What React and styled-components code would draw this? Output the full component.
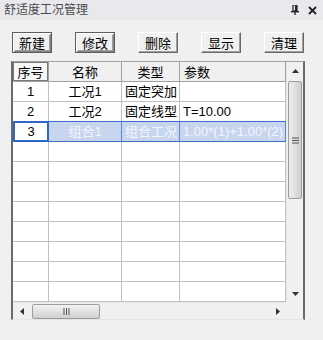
import React from "react";
import styled, { createGlobalStyle, css } from "styled-components";

const Global = createGlobalStyle`
  html, body { margin: 0; padding: 0; background: #f0f0f0; }
  body { font-family: "Liberation Sans", "Noto Sans CJK SC", sans-serif; }
  #root { width: 323px; height: 340px; overflow: hidden; }
`;

const Panel = styled.div`
  width: 323px;
  height: 340px;
  background: #f0f0f0;
  display: flex;
  flex-direction: column;
`;

const TitleBar = styled.div`
  height: 20px;
  background: #e8e9ed;
  display: flex;
  align-items: center;
  padding: 0 6px 0 4px;
  color: #4a4a4a;
  font-size: 12px;
  font-family: "Noto Sans CJK SC", sans-serif;
`;

const TitleText = styled.span`
  flex: 1;
  line-height: 20px;
  position: relative;
  top: -1px;
`;

const TitleIcons = styled.div`
  display: flex;
  align-items: center;
  gap: 9px;
`;

const Toolbar = styled.div`
  display: flex;
  justify-content: space-between;
  padding: 12px 19px 0 12px;
  height: 21px;
`;

const Button = styled.button`
  width: 40px;
  height: 21px;
  padding: 0;
  margin: 0;
  background: #f0f0f0;
  font-family: "Noto Sans CJK SC", sans-serif;
  font-size: 13px;
  color: #000;
  line-height: 17px;
  box-sizing: border-box;
  ${(p) =>
    p.$def
      ? css`
          border: 1px solid #5e5e5e;
          box-shadow: inset 1px 1px #fff, inset -1px -1px #808080,
            inset 2px 2px #f0f0f0, inset -2px -2px #a0a0a0;
        `
      : css`
          border: 1px solid;
          border-color: #fff #696969 #696969 #fff;
          box-shadow: inset -1px -1px #a0a0a0;
        `}
`;

const Frame = styled.div`
  margin: 8px 0 0 11px;
  width: 294px;
  box-sizing: border-box;
  border-top: 1px solid #a0a0a0;
  border-left: 2px solid #6a6a6a;
  border-right: 2px solid #6a6a6a;
  border-bottom: 1px solid #e4e4e4;
  display: grid;
  grid-template-columns: 273px 17px;
  grid-template-rows: 240px 17px;
  background: #f0f0f0;
`;

const Table = styled.div`
  background: #fff;
  overflow: hidden;
  display: grid;
  grid-template-columns: 36px 73px 58px 106px;
  grid-auto-rows: 20px;
  grid-template-rows: 20px;
`;

const HeadCell = styled.div`
  box-sizing: border-box;
  background: ${(p) => (p.$active ? "#f7f7f7" : "#f0f0f0")};
  border-right: 1px solid #a0a0a0;
  border-bottom: 1px solid #a0a0a0;
  ${(p) =>
    p.$active &&
    css`
      box-shadow: inset 1px 1px #7a7a7a, inset -1px -1px #7a7a7a;
    `}
  font-family: "Noto Sans CJK SC", sans-serif;
  font-size: 13px;
  color: #000;
  line-height: 19px;
  text-align: ${(p) => p.$align || "center"};
  padding-left: ${(p) => (p.$align === "left" ? "4px" : "0")};
  white-space: nowrap;
  overflow: hidden;
`;

const Cell = styled.div`
  box-sizing: border-box;
  border-right: 1px solid #c0c0c0;
  border-bottom: 1px solid #c0c0c0;
  font-size: 13px;
  line-height: 19px;
  color: #000;
  white-space: nowrap;
  overflow: hidden;
  text-align: ${(p) => p.$align || "center"};
  padding-left: ${(p) => (p.$align === "left" ? "3px" : "0")};
  ${(p) =>
    p.$sel &&
    css`
      background: #c7d5ef;
      color: #f2f5fc;
      border-right: 1px solid #5a88d8;
      border-top: 1px solid #3b6fc9;
      border-bottom: 1px solid #3b6fc9;
      margin-top: -1px;
      height: 21px;
      line-height: 19px;
    `}
  ${(p) =>
    p.$focus &&
    css`
      background: #fff;
      color: #000;
      border: 2px solid #3066c6;
      margin-top: -1px;
      height: 21px;
      line-height: 17px;
    `}
`;

const VScroll = styled.div`
  background: #f0f0f0;
  border-left: 1px solid #e8e8e8;
  display: flex;
  flex-direction: column;
  align-items: center;
`;

const ArrowBtn = styled.div`
  width: 16px;
  height: 17px;
  display: flex;
  align-items: center;
  justify-content: center;
  flex: none;
`;

const VThumb = styled.div`
  margin-top: 2px;
  width: 14px;
  height: 118px;
  box-sizing: border-box;
  border: 1px solid #9c9c9c;
  border-radius: 2px;
  background: linear-gradient(to right, #ececec, #e0e0e0 45%, #cfcfcf);
  display: flex;
  align-items: center;
  justify-content: center;
`;

const VTrack = styled.div`
  flex: 1;
  width: 100%;
`;

const HScroll = styled.div`
  background: #f0f0f0;
  border-top: 1px solid #e8e8e8;
  display: flex;
  align-items: center;
`;

const HArrow = styled.div`
  width: 17px;
  height: 16px;
  display: flex;
  align-items: center;
  justify-content: center;
  flex: none;
`;

const HThumb = styled.div`
  margin-left: 2px;
  width: 68px;
  height: 15px;
  box-sizing: border-box;
  border: 1px solid #9c9c9c;
  border-radius: 2px;
  background: linear-gradient(to bottom, #f2f2f2, #e2e2e2 50%, #d0d0d0);
  display: flex;
  align-items: center;
  justify-content: center;
`;

const HTrack = styled.div`
  flex: 1;
`;

const Corner = styled.div`
  background: #f0f0f0;
`;

const rows = [
  ["1", "工况1", "固定突加", ""],
  ["2", "工况2", "固定线型", "T=10.00"],
  ["3", "组合1", "组合工况", "1.00*(1)+1.00*(2)"],
];

export default function App() {
  const empty = Array.from({ length: 9 });
  return (
    <Panel>
      <Global />
      <TitleBar>
        <TitleText>舒适度工况管理</TitleText>
        <TitleIcons>
          <svg width="8" height="10" viewBox="0 0 8 10">
            <rect x="2" y="0" width="4" height="6" fill="none" stroke="#222" strokeWidth="1.2" />
            <rect x="4" y="0.5" width="2" height="5.5" fill="#222" />
            <rect x="0" y="6" width="8" height="1.4" fill="#222" />
            <rect x="3.4" y="7" width="1.3" height="3" fill="#222" />
          </svg>
          <svg width="9" height="9" viewBox="0 0 9 9">
            <path d="M1 1 L8 8 M8 1 L1 8" stroke="#222" strokeWidth="1.8" />
          </svg>
        </TitleIcons>
      </TitleBar>
      <Toolbar>
        <Button $def>新建</Button>
        <Button $def>修改</Button>
        <Button>删除</Button>
        <Button>显示</Button>
        <Button>清理</Button>
      </Toolbar>
      <Frame>
        <Table>
          <HeadCell $active>序号</HeadCell>
          <HeadCell>名称</HeadCell>
          <HeadCell>类型</HeadCell>
          <HeadCell $align="left">参数</HeadCell>
          {rows.map((r, i) => {
            const sel = i === 2;
            return (
              <React.Fragment key={i}>
                <Cell $focus={sel}>{r[0]}</Cell>
                <Cell $sel={sel}>{r[1]}</Cell>
                <Cell $sel={sel} $align="left">{r[2]}</Cell>
                <Cell $sel={sel} $align="left">{r[3]}</Cell>
              </React.Fragment>
            );
          })}
          {empty.map((_, i) => (
            <React.Fragment key={"e" + i}>
              <Cell />
              <Cell />
              <Cell />
              <Cell />
            </React.Fragment>
          ))}
        </Table>
        <VScroll>
          <ArrowBtn>
            <svg width="7" height="4" viewBox="0 0 7 4">
              <path d="M0 4 L3.5 0 L7 4 Z" fill="#333" />
            </svg>
          </ArrowBtn>
          <VThumb>
            <svg width="7" height="7" viewBox="0 0 7 7">
              <path d="M0 1 H7 M0 3.5 H7 M0 6 H7" stroke="#555" strokeWidth="1" />
            </svg>
          </VThumb>
          <VTrack />
          <ArrowBtn>
            <svg width="7" height="4" viewBox="0 0 7 4">
              <path d="M0 0 L7 0 L3.5 4 Z" fill="#333" />
            </svg>
          </ArrowBtn>
        </VScroll>
        <HScroll>
          <HArrow>
            <svg width="4" height="7" viewBox="0 0 4 7">
              <path d="M4 0 L4 7 L0 3.5 Z" fill="#333" />
            </svg>
          </HArrow>
          <HThumb>
            <svg width="7" height="7" viewBox="0 0 7 7">
              <path d="M1 0 V7 M3.5 0 V7 M6 0 V7" stroke="#555" strokeWidth="1" />
            </svg>
          </HThumb>
          <HTrack />
          <HArrow>
            <svg width="4" height="7" viewBox="0 0 4 7">
              <path d="M0 0 L0 7 L4 3.5 Z" fill="#333" />
            </svg>
          </HArrow>
        </HScroll>
        <Corner />
      </Frame>
    </Panel>
  );
}
